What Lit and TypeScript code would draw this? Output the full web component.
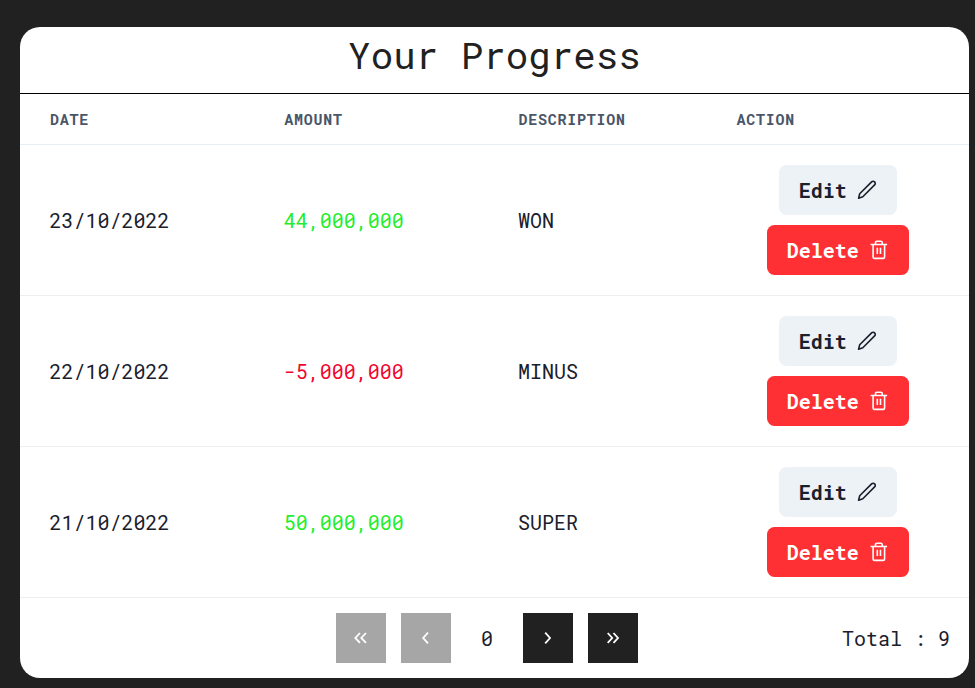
import { LitElement, html, css, svg } from "lit";
import { customElement } from "lit/decorators.js";
import { classMap } from "lit/directives/class-map.js";

interface Entry {
  date: string;
  amount: number;
  description: string;
}

const entries: Entry[] = [
  { date: "23/10/2022", amount: 44000000, description: "WON" },
  { date: "22/10/2022", amount: -5000000, description: "MINUS" },
  { date: "21/10/2022", amount: 50000000, description: "SUPER" },
];

const pager = [
  { label: "First page", d: ["M9 5 4.3 10l4.7 4.8", "M15 5 10.3 10l4.7 4.8"], off: true },
  { label: "Previous page", d: ["M12 4.7 7.2 10l4.8 5.3"], off: true },
  { label: "Next page", d: ["M7.2 4.7 12 10l-4.8 5.3"], off: false },
  { label: "Last page", d: ["M4.7 5 9.2 10l-4.5 4.8", "M10.5 5 15 10l-4.5 4.8"], off: false },
];

@customElement("app-root")
export class AppRoot extends LitElement {
  static styles = css`
    :host {
      display: block;
      box-sizing: border-box;
      height: 688px;
      padding: 27px 6px 10px 20px;
      background: #212121;
      overflow: hidden;
      color: #1a202c;
      font: 20px/30px "Roboto Mono", "DejaVu Sans Mono", monospace;
    }
    .card {
      height: 651px;
      border-radius: 20px;
      background: #fff;
      overflow: hidden;
    }
    .title {
      box-sizing: border-box;
      height: 67px;
      margin: 0;
      border-bottom: 1px solid #000;
      color: #212121;
      font-size: 37.5px;
      font-weight: 400;
      line-height: 56px;
      text-align: center;
    }
    .row {
      display: grid;
      grid-template-columns: 234.3px 234.3px 218px 1fr;
      align-items: center;
      box-sizing: border-box;
      height: 151px;
      border-bottom: 1px solid #edeeef;
    }
    .head {
      height: 51px;
      border-color: #e6eff5;
      color: #4a5568;
      font-size: 15px;
      font-weight: 700;
      letter-spacing: 0.75px;
      line-height: 20px;
    }
    .cell {
      padding-left: 29.4px;
    }
    .head .cell {
      padding-left: 30px;
    }
    .gain {
      color: #22ee2b;
    }
    .loss {
      color: #f1062d;
    }
    .actions {
      display: flex;
      flex-direction: column;
      align-items: center;
      gap: 10px;
    }
    button {
      font: inherit;
      border: 0;
      display: flex;
      align-items: center;
      justify-content: center;
    }
    .btn {
      height: 50px;
      padding: 0 20px;
      gap: 10px;
      border-radius: 7.5px;
      background: #edf2f7;
      color: #1a202c;
      font-weight: 700;
      line-height: 24px;
    }
    .danger {
      background: #ff3034;
      color: #fff;
    }
    svg {
      display: block;
      width: 20px;
      height: 20px;
      fill: none;
      stroke: currentColor;
    }
    .footer {
      display: grid;
      grid-template-columns: 1fr auto 1fr;
      align-items: center;
      height: 80px;
    }
    .pages {
      grid-column: 2;
      display: flex;
      align-items: center;
      gap: 15px;
      padding-right: 15px;
    }
    .page {
      width: 50px;
      height: 50px;
      padding: 0;
      background: #212121;
      color: #fff;
    }
    .off {
      background: #a6a6a6;
    }
    .current {
      padding: 0 15px;
    }
    .total {
      justify-self: end;
      padding-right: 19px;
    }
  `;

  private pencil() {
    return svg`<svg viewBox="0 0 20 20" stroke-width="1.6" stroke-linejoin="round">
      <path d="M1.6 18.2 2.7 13.8 14.6 1.9a2.1 2.1 0 0 1 3 0 2.1 2.1 0 0 1 0 3L5.8 16.7Z"/>
    </svg>`;
  }

  private trash() {
    return svg`<svg viewBox="0 0 20 20" stroke-width="1.6" stroke-linejoin="round">
      <path d="M1.6 4.5h16.5M4.1 4.5v12.4q0 1.5 1.5 1.5h8.5q1.5 0 1.5-1.5V4.5M6.5 4.3V2.6q0-1.4 1.4-1.4h3.9q1.4 0 1.4 1.4v1.7M8.3 7.7v6.4M11.5 7.7v6.4"/>
    </svg>`;
  }

  private pageButton(p: (typeof pager)[number]) {
    return html`<button class=${classMap({ page: true, off: p.off })} aria-label=${p.label}>
      <svg viewBox="0 0 20 20" stroke-width="1.8">${p.d.map((d) => svg`<path d=${d}/>`)}</svg>
    </button>`;
  }

  render() {
    return html`<main class="card">
      <h1 class="title">Your Progress</h1>
      <div class="row head">
        ${["DATE", "AMOUNT", "DESCRIPTION", "ACTION"].map((t) => html`<div class="cell">${t}</div>`)}
      </div>
      ${entries.map(
        (e) => html`<div class="row">
          <div class="cell">${e.date}</div>
          <div class=${classMap({ cell: true, gain: e.amount > 0, loss: e.amount < 0 })}>${e.amount.toLocaleString("en-US")}</div>
          <div class="cell">${e.description}</div>
          <div class="actions">
            <button class="btn">Edit ${this.pencil()}</button>
            <button class="btn danger">Delete ${this.trash()}</button>
          </div>
        </div>`
      )}
      <div class="footer">
        <div class="pages">
          ${pager.slice(0, 2).map((p) => this.pageButton(p))}
          <span class="current">0</span>
          ${pager.slice(2).map((p) => this.pageButton(p))}
        </div>
        <div class="total">Total : 9</div>
      </div>
    </main>`;
  }
}
